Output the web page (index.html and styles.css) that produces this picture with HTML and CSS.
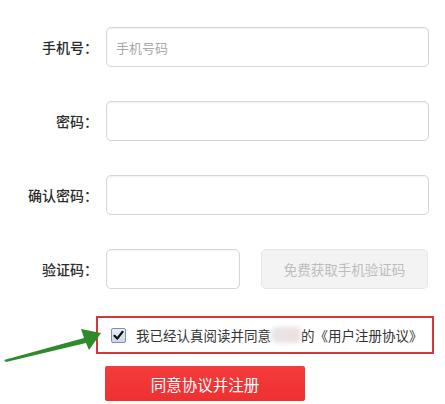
FILE: index.html
```html
<!DOCTYPE html>
<html lang="zh-CN">
<head>
<meta charset="utf-8">
<link rel="stylesheet" href="styles.css">
</head>
<body>
<div class="page">
  <form class="form">
    <div class="row">
      <label class="label">手机号：</label>
      <div class="input"><span class="placeholder">手机号码</span></div>
    </div>
    <div class="row">
      <label class="label">密码：</label>
      <div class="input"></div>
    </div>
    <div class="row">
      <label class="label">确认密码：</label>
      <div class="input"></div>
    </div>
    <div class="row">
      <label class="label">验证码：</label>
      <div class="code-group">
        <div class="input input-code"></div>
        <div class="btn-code">免费获取手机验证码</div>
      </div>
    </div>
  </form>
  <div class="agree">
    <span class="checkbox">
      <svg width="11" height="11" viewBox="0 0 11 11"><path d="M1.5 5.8 L4.2 8.6 L9.6 1.8" fill="none" stroke="#111" stroke-width="2.2" stroke-linecap="round" stroke-linejoin="round"/></svg>
    </span>
    <span class="agree-text">我已经认真阅读并同意<span class="smudge"></span>的《用户注册协议》</span>
  </div>
  <div class="submit-row">
    <div class="btn-submit">同意协议并注册</div>
  </div>
  <svg class="arrow" width="110" height="40" viewBox="0 0 110 40">
    <polygon points="4,33 84,11 81,2 101,6 89,23 86,16 6,35" fill="#2f8a2c"/>
  </svg>
</div>
</body>
</html>
```
FILE: styles.css
```css
* { box-sizing: border-box; }
html, body { margin: 0; padding: 0; background: #fff; }
body {
  font-family: "Noto Sans CJK SC", "Microsoft YaHei", sans-serif;
  color: #333;
}
.page {
  position: relative;
  width: 445px;
  height: 404px;
  overflow: hidden;
}
.form {
  display: flex;
  flex-direction: column;
  gap: 34px;
  padding-top: 27px;
  margin: 0;
}
.row {
  display: grid;
  grid-template-columns: 98px 323px;
  column-gap: 8px;
  align-items: center;
}
.label {
  text-align: right;
  font-size: 14px;
  font-weight: 500;
  color: #2b2b2b;
  line-height: 20px;
}
.input {
  height: 40px;
  border: 1px solid #d6d6d6;
  border-radius: 5px;
  background: #fff;
  box-shadow: inset 0 1px 2px rgba(0,0,0,0.06);
  display: flex;
  align-items: center;
  padding-left: 9px;
}
.placeholder {
  font-size: 13px;
  color: #a8a8a8;
}
.code-group {
  display: flex;
  gap: 21px;
  align-items: center;
}
.input-code { width: 134px; }
.btn-code {
  width: 167px;
  height: 40px;
  border: 1px solid #e6e6e6;
  border-radius: 5px;
  background: #f3f3f3;
  color: #bdbdbd;
  font-size: 13.5px;
  display: flex;
  align-items: center;
  justify-content: center;
}
.agree {
  margin: 27px 0 0 96px;
  width: 338px;
  height: 38px;
  border: 2px solid #d8353a;
  display: flex;
  align-items: center;
  padding-left: 13px;
  gap: 10px;
}
.checkbox {
  width: 15px;
  height: 15px;
  border: 1px solid #7d8fb3;
  border-radius: 2px;
  background: linear-gradient(#e9eef8, #cdd8ec);
  display: flex;
  align-items: center;
  justify-content: center;
}
.agree-text {
  font-size: 13.5px;
  color: #333;
  display: flex;
  align-items: center;
  white-space: nowrap;
}
.smudge {
  display: inline-block;
  width: 30px;
  height: 16px;
  background: linear-gradient(90deg, #e6e6e6, #f2dede);
  filter: blur(2px);
  border-radius: 6px;
}
.submit-row {
  margin: 12px 0 0 105px;
}
.btn-submit {
  width: 200px;
  height: 35px;
  border-radius: 2px;
  background: linear-gradient(#f43b3b, #ee3030);
  color: #fff;
  font-size: 15.5px;
  display: flex;
  align-items: center;
  justify-content: center;
}
.arrow {
  position: absolute;
  left: 0;
  top: 327px;
}
```
